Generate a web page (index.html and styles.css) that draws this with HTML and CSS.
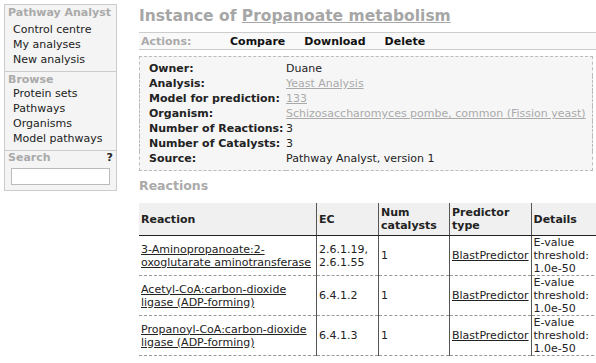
FILE: index.html
```html
<!DOCTYPE html>
<html lang="en">
<head>
    <meta charset="UTF-8">
    <title>Instance of Propanoate metabolism</title>
    <link rel="stylesheet" href="styles.css">
</head>
<body>
    <div class="page">
        <div class="sidebar">
            <div class="side-section">
                <div class="side-title">Pathway Analyst</div>
                <a href="#">Control centre</a>
                <a href="#">My analyses</a>
                <a href="#">New analysis</a>
            </div>
            <div class="side-section">
                <div class="side-title">Browse</div>
                <a href="#">Protein sets</a>
                <a href="#">Pathways</a>
                <a href="#">Organisms</a>
                <a href="#">Model pathways</a>
            </div>
            <div class="side-section search">
                <div class="side-title">Search <span class="help">?</span></div>
                <input type="text" class="search-box">
            </div>
        </div>

        <div class="main">
            <h1>Instance of <a href="#">Propanoate metabolism</a></h1>

            <div class="actions">
                <span class="actions-label">Actions:</span>
                <a href="#">Compare</a>
                <a href="#">Download</a>
                <a href="#">Delete</a>
            </div>

            <table class="info">
                <tr><th>Owner:</th><td>Duane</td></tr>
                <tr><th>Analysis:</th><td><a href="#">Yeast Analysis</a></td></tr>
                <tr><th>Model for prediction:</th><td><a href="#">133</a></td></tr>
                <tr><th>Organism:</th><td><a href="#">Schizosaccharomyces pombe, common (Fission yeast)</a></td></tr>
                <tr><th>Number of Reactions:</th><td>3</td></tr>
                <tr><th>Number of Catalysts:</th><td>3</td></tr>
                <tr><th>Source:</th><td>Pathway Analyst, version 1</td></tr>
            </table>

            <h2>Reactions</h2>

            <table class="reactions">
                <tr>
                    <th class="c-reaction">Reaction</th>
                    <th class="c-ec">EC</th>
                    <th class="c-num">Num catalysts</th>
                    <th class="c-pred">Predictor type</th>
                    <th class="c-details">Details</th>
                </tr>
                <tr>
                    <td><a href="#">3-Aminopropanoate:2-oxoglutarate aminotransferase</a></td>
                    <td>2.6.1.19, 2.6.1.55</td>
                    <td>1</td>
                    <td><a href="#">BlastPredictor</a></td>
                    <td>E-value threshold: 1.0e-50</td>
                </tr>
                <tr>
                    <td><a href="#">Acetyl-CoA:carbon-dioxide ligase (ADP-forming)</a></td>
                    <td>6.4.1.2</td>
                    <td>1</td>
                    <td><a href="#">BlastPredictor</a></td>
                    <td>E-value threshold: 1.0e-50</td>
                </tr>
                <tr>
                    <td><a href="#">Propanoyl-CoA:carbon-dioxide ligase (ADP-forming)</a></td>
                    <td>6.4.1.3</td>
                    <td>1</td>
                    <td><a href="#">BlastPredictor</a></td>
                    <td>E-value threshold: 1.0e-50</td>
                </tr>
            </table>
        </div>
    </div>
</body>
</html>
```

FILE: styles.css
```css
body {
    font-family: "DejaVu Sans", Verdana, sans-serif;
    font-size: 11px;
    color: #222;
    background-color: #fff;
    margin: 0;
    padding: 0;
    overflow: hidden;
}
.page {
    display: flex;
    align-items: flex-start;
    padding: 4px 0 0 4px;
}
.sidebar {
    width: 111px;
    flex-shrink: 0;
    border: 1px solid #ccc;
    background-color: #f4f4f4;
}
.side-section {
    display: flex;
    flex-direction: column;
    padding: 1px 0 4px 0;
    border-bottom: 1px solid #ccc;
}
.side-section:last-child {
    border-bottom: none;
    padding-bottom: 5px;
}
.side-title {
    font-weight: bold;
    color: #aaa;
    padding: 0 3px;
    line-height: 13px;
    display: flex;
    justify-content: space-between;
}
.side-section:first-child .side-title {
    margin-bottom: 3px;
}
.search .side-title {
    margin-top: -1px;
}
.help {
    color: #222;
}
.sidebar a {
    color: #222;
    text-decoration: none;
    line-height: 15px;
    padding-left: 8px;
}
.search-box {
    margin: 4px 0 0 6px;
    width: 99px;
    height: 17px;
    padding: 0;
    border: 1px solid #bbb;
    background-color: #fff;
    box-sizing: border-box;
}
.main {
    margin-left: 22px;
    flex: 1;
    min-width: 0;
}
h1 {
    font-size: 15.5px;
    color: #a6a6a6;
    margin: 0;
    line-height: 24px;
}
h1 a {
    color: #a6a6a6;
}
.actions {
    display: flex;
    align-items: center;
    height: 16px;
    margin-top: 4px;
    border-top: 1px solid #ccc;
    border-bottom: 1px solid #ccc;
    background-color: #f9f9f9;
    font-weight: bold;
}
.actions-label {
    color: #aaa;
    width: 89px;
    padding-left: 2px;
}
.actions a {
    color: #111;
    text-decoration: none;
    margin-right: 19px;
}
table {
    border-collapse: collapse;
}
.info {
    width: 454px;
    margin-top: 6px;
    border: 1px dashed #bbb;
    background-color: #f6f6f6;
}
.info th {
    text-align: left;
    white-space: nowrap;
    width: 137px;
    padding: 0 0 0 9px;
    line-height: 15px;
}
.info td {
    padding: 0;
    line-height: 15px;
    white-space: nowrap;
}
.info tr:first-child th,
.info tr:first-child td {
    padding-top: 4px;
}
.info tr:last-child th,
.info tr:last-child td {
    padding-bottom: 4px;
}
.info a {
    color: #aaa;
}
h2 {
    font-size: 12.5px;
    color: #aaa;
    margin: 7px 0 0 0;
    line-height: 16px;
}
.reactions {
    width: 460px;
    margin-top: 9px;
}
.reactions th {
    text-align: left;
    background-color: #f0f0f0;
    padding: 3px 2px;
    line-height: 13px;
    border-bottom: 1px solid #222;
    border-left: 1px solid #555;
}
.reactions td {
    vertical-align: middle;
    padding: 0 2px;
    line-height: 13px;
    border-bottom: 1px dashed #999;
    border-left: 1px solid #555;
}
.reactions th:first-child,
.reactions td:first-child {
    border-left: none;
}
.reactions a {
    color: #222;
}
.c-reaction { width: 173px; }
.c-ec { width: 57px; }
.c-num { width: 66px; }
.c-pred { width: 72px; }
```
